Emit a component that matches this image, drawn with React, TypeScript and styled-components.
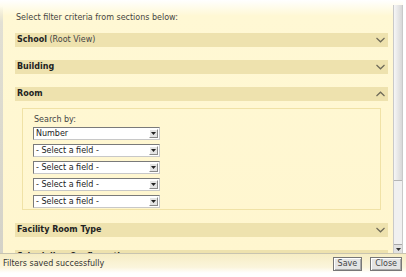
import React from 'react';
import styled, { createGlobalStyle } from 'styled-components';

const GlobalStyle = createGlobalStyle`
  html, body {
    margin: 0;
    padding: 0;
    background: #fff;
  }
`;

interface ISection {
  title: string;
  note?: string;
  open?: boolean;
}

const sections: ISection[] = [
  { title: 'School', note: '(Root View)' },
  { title: 'Building' },
  { title: 'Room', open: true },
  { title: 'Facility Room Type' },
  { title: 'Scheduling Configuration' },
];

const fieldRows = ['Number', '- Select a field -', '- Select a field -', '- Select a field -', '- Select a field -'];

const Chevron: React.FC<{ up?: boolean }> = ({ up }) => (
  <svg width="9" height="6" viewBox="0 0 9 6">
    <path
      d={up ? 'M0.5 5L4.5 1.2L8.5 5' : 'M0.5 1L4.5 4.8L8.5 1'}
      fill="none"
      stroke="#6e6a58"
      strokeWidth="1.2"
    />
  </svg>
);

const FilterPanel: React.FC = () => {
  return (
    <Frame>
      <GlobalStyle />
      <Body>
        <Shade />
        <Scroller>
          <Intro>Select filter criteria from sections below:</Intro>
          {sections.map((s) => (
            <React.Fragment key={s.title}>
              <Band>
                <BandTitle>
                  <b>{s.title}</b>
                  {s.note && <span> {s.note}</span>}
                </BandTitle>
                <Chevron up={s.open} />
              </Band>
              {s.open && (
                <Inner>
                  <Label>Search by:</Label>
                  {fieldRows.map((f, i) => (
                    <Select key={i}>
                      <SelectText>{f}</SelectText>
                      <SelectArrow>
                        <svg width="5" height="3" viewBox="0 0 5 3">
                          <path d="M0 0H5L2.5 3Z" fill="#222" />
                        </svg>
                      </SelectArrow>
                    </Select>
                  ))}
                </Inner>
              )}
            </React.Fragment>
          ))}
        </Scroller>
        <ScrollBar>
          <Thumb />
          <Track />
          <ArrowBtn>
            <svg width="5" height="3" viewBox="0 0 5 3">
              <path d="M0 0H5L2.5 3Z" fill="#333" />
            </svg>
          </ArrowBtn>
        </ScrollBar>
        <Edge />
      </Body>
      <Status>
        <StatusText>Filters saved successfully</StatusText>
        <Buttons>
          <Btn>Save</Btn>
          <Btn>Close</Btn>
        </Buttons>
      </Status>
    </Frame>
  );
};

const Frame = styled.div`
  width: 406px;
  height: 277px;
  display: flex;
  flex-direction: column;
  font-family: 'DejaVu Sans', Verdana, sans-serif;
  font-size: 8px;
  color: #333;
  overflow: hidden;
`;

const Body = styled.div`
  height: 253px;
  flex-shrink: 0;
  display: flex;
  overflow: hidden;
  background: linear-gradient(to bottom, #ffffff 0px, #fff8d4 16px, #fff6cf 100%);
`;

const Shade = styled.div`
  width: 3px;
  flex-shrink: 0;
  background: linear-gradient(to bottom, rgba(255, 255, 255, 0) 6px, #e2e0d4 22px, #d4d2c8 100%);
`;

const Scroller = styled.div`
  flex: 1;
  min-height: 0;
  overflow: hidden;
  padding: 13px 5px 0 12px;
`;

const Intro = styled.div`
  line-height: 10px;
  padding-left: 1px;
  margin-bottom: 10px;
  color: #444;
`;

const Band = styled.div`
  height: 14px;
  flex-shrink: 0;
  background: #eee2ae;
  display: flex;
  align-items: center;
  justify-content: space-between;
  padding: 0 3px 0 2px;
  margin-bottom: 13px;
`;

const BandTitle = styled.div`
  line-height: 14px;
  white-space: nowrap;
  color: #222;
  b {
    font-weight: bold;
  }
  span {
    color: #444;
  }
`;

const Inner = styled.div`
  margin: -6px 7px 13px 7px;
  border: 1px solid #f0e2a6;
  padding: 4px 10px 1px 10px;
  display: flex;
  flex-direction: column;
  gap: 4px;
`;

const Label = styled.div`
  line-height: 10px;
  margin: 2px 0 -2px 1px;
  color: #444;
`;

const Select = styled.div`
  width: 127px;
  height: 13px;
  box-sizing: border-box;
  background: #fff;
  border: 1px solid #7a7a7a;
  border-right-color: #c8c8c8;
  border-bottom-color: #c8c8c8;
  display: flex;
  align-items: center;
  justify-content: space-between;
`;

const SelectText = styled.span`
  padding-left: 2px;
  line-height: 11px;
  color: #222;
`;

const SelectArrow = styled.span`
  width: 9px;
  height: 9px;
  margin-right: 1px;
  background: #e4e4e4;
  border: 1px solid;
  border-color: #fff #8a8a8a #8a8a8a #fff;
  box-sizing: border-box;
  display: flex;
  align-items: center;
  justify-content: center;
`;

const ScrollBar = styled.div`
  width: 8px;
  flex-shrink: 0;
  margin-top: 5px;
  display: flex;
  flex-direction: column;
  background: #ececec;
  border-left: 1px solid #c9c9c9;
  border-right: 1px solid #c9c9c9;
`;

const Thumb = styled.div`
  height: 175px;
  background: linear-gradient(to right, #f6f6f6, #d8d8d8);
  border-bottom: 1px solid #b5b5b5;
`;

const Track = styled.div`
  flex: 1;
  background: #f0f0f0;
`;

const ArrowBtn = styled.div`
  height: 8px;
  background: #e2e2e2;
  border-top: 1px solid #a8a8a8;
  display: flex;
  align-items: center;
  justify-content: center;
`;

const Edge = styled.div`
  width: 3px;
  flex-shrink: 0;
  background: #fff;
`;

const Status = styled.div`
  height: 19px;
  border-top: 1px solid #c8c4b0;
  background: linear-gradient(to bottom, #f6edc4 0%, #fbf5dc 70%, #ffffff 100%);
  display: flex;
  align-items: center;
  justify-content: space-between;
  padding: 0 4px 0 3px;
`;

const StatusText = styled.span`
  color: #333;
`;

const Buttons = styled.div`
  display: flex;
  gap: 8px;
`;

const Btn = styled.button`
  font-family: 'DejaVu Sans', Verdana, sans-serif;
  font-size: 8px;
  color: #444;
  height: 14px;
  padding: 0 4px;
  background: #e4e4e4;
  border: 1px solid #777;
  box-shadow: inset 1px 1px 0 #fff, inset -1px -1px 0 #aaa;
  border-radius: 0;
  line-height: 12px;
`;

export default FilterPanel;
